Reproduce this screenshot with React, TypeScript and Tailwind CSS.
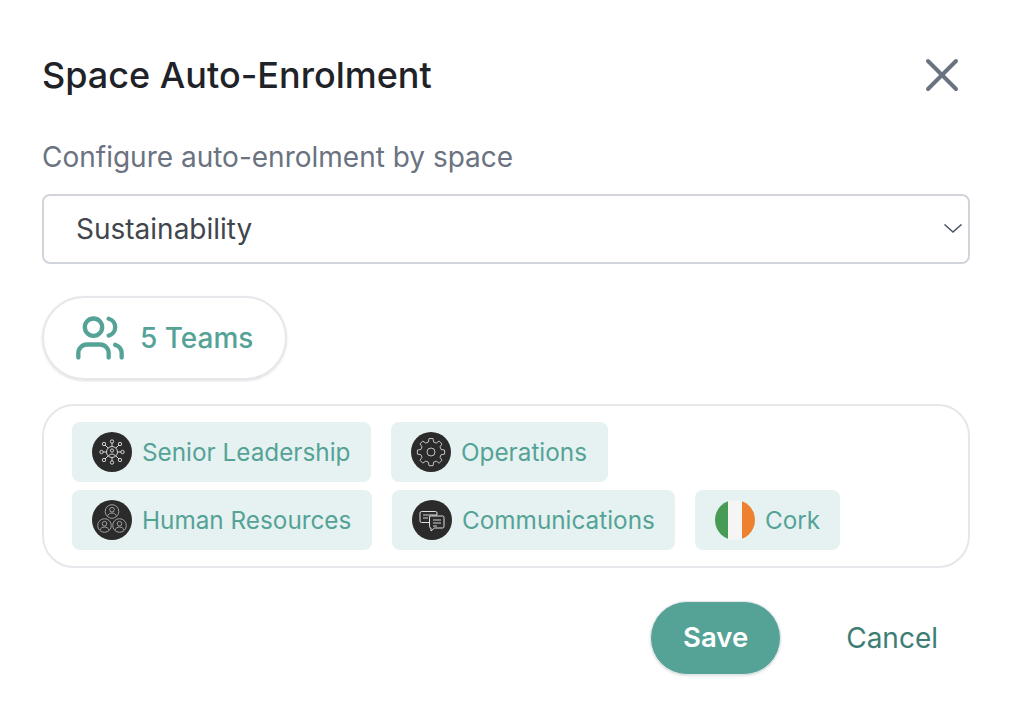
import React from 'react';
import { X, Users } from 'lucide-react';

const SeniorIcon = () => (
  <svg viewBox="0 0 40 40" className="h-10 w-10 rounded-full bg-[#2b2b2b]" fill="none" stroke="#e5e5e5" strokeWidth="0.9">
    <circle cx="20" cy="20" r="5.5" />
    <circle cx="20" cy="18.500" r="1.600" />
    <path d="M16.800 24c.4-2.600 6-2.600 6.400 0" />
    <path d="M20 14.500V11M20 25.500V29M14.500 20H11M25.500 20H29M16 16l-3-3M24 16l3-3M16 24l-3 3M24 24l3 3" />
    <circle cx="20" cy="9.500" r="1.700" />
    <circle cx="20" cy="30.500" r="1.700" />
    <circle cx="9.500" cy="20" r="1.700" />
    <circle cx="30.500" cy="20" r="1.700" />
    <circle cx="12" cy="12" r="1.700" />
    <circle cx="28" cy="12" r="1.700" />
    <circle cx="12" cy="28" r="1.700" />
    <circle cx="28" cy="28" r="1.700" />
  </svg>
);

const PersonRing = ({ cx, cy }: { cx: number; cy: number }) => (
  <g>
    <circle cx={cx} cy={cy} r="6.800" />
    <circle cx={cx} cy={cy - 1.800} r="2.300" />
    <path d={`M${cx - 4.200} ${cy + 4.400}c.4-3.800 8-3.800 8.400 0`} />
  </g>
);

const HrIcon = () => (
  <svg viewBox="0 0 40 40" className="h-10 w-10 rounded-full bg-[#2b2b2b]" fill="none" stroke="#bdbdbd" strokeWidth="0.8">
    <PersonRing cx={20} cy={11.500} />
    <PersonRing cx={12.500} cy={25.500} />
    <PersonRing cx={27.500} cy={25.500} />
  </svg>
);

const GearIcon = () => (
  <svg viewBox="0 0 40 40" className="h-10 w-10 rounded-full bg-[#2b2b2b]" fill="none" stroke="#e8e8e8" strokeWidth="0.8" strokeLinejoin="round">
    <circle cx="20" cy="20" r="4" />
    <path d="M18 6.500h4l.7 3.600 2.500 1 3-2 2.800 2.800-2 3 1 2.500 3.600.7v4l-3.600.7-1 2.500 2 3-2.800 2.800-3-2-2.500 1-.7 3.600h-4l-.7-3.600-2.500-1-3 2-2.800-2.800 2-3-1-2.500-3.600-.7v-4l3.600-.7 1-2.500-2-3 2.800-2.800 3 2 2.500-1z" />
  </svg>
);

const ChatIcon = () => (
  <svg viewBox="0 0 40 40" className="h-10 w-10 rounded-full bg-[#2b2b2b]" fill="none" stroke="#e0e0e0" strokeWidth="1">
    <path d="M9.500 11.500h14a1.500 1.500 0 0 1 1.500 1.500v2h-6a1.500 1.500 0 0 0-1.500 1.500v6H12l-2.500 0a1.500 1.500 0 0 1-1.500-1.500v-8a1.500 1.500 0 0 1 1.500-1.500z" />
    <path d="M19.500 16h11a1.500 1.500 0 0 1 1.500 1.500v9a1.500 1.500 0 0 1-1.500 1.500h-8l-3.500 3v-3a1.500 1.500 0 0 1-1.500-1.500v-9a1.500 1.500 0 0 1 1.500-1.500z" fill="#2b2b2b" />
    <path d="M11 15h9M11 18h5M21 20h8M21 23h8M21 26h4" stroke="#9a9a9a" strokeWidth="1.300" />
  </svg>
);

const FlagIcon = () => (
  <span className="flex h-10 w-10 overflow-hidden rounded-full">
    <span className="flex-1 bg-[#479b54]" />
    <span className="flex-1 bg-[#f5f5f5]" />
    <span className="flex-1 bg-[#ee8130]" />
  </span>
);

const Chip = ({ icon, label, className }: { icon: React.ReactNode; label: string; className: string }) => (
  <div className={`flex h-[60px] items-center gap-[10px] rounded-lg bg-[#e6f2f1] pl-5 text-[24.300px] text-[#55a297] ${className}`}>
    {icon}
    <span>{label}</span>
  </div>
);

export default function App() {
  return (
    <div className="h-[722px] w-[1012px] bg-white px-[42px] pt-[50px] font-['Inter',sans-serif]">
      <div className="flex h-[50px] items-center justify-between">
        <h1 className="text-[36px] font-medium text-[#1f2328]">Space Auto-Enrolment</h1>
        <X className="mr-[0px] h-14 w-14 text-[#6b7280]" strokeWidth={1.700} />
      </div>

      <p className="mt-[37px] h-[40px] text-[28px] leading-[40px] text-[#6b7280]">Configure auto-enrolment by space</p>

      <div className="relative mt-[17px] h-[70px] rounded-lg border-2 border-[#d1d5db]">
        <div className="flex h-full items-center pl-[32px] text-[28px] text-[#41454d]">Sustainability</div>
        <svg viewBox="0 0 18 9" className="absolute right-[6px] top-[28px] h-[9px] w-[18px]" fill="none" stroke="#4b5563" strokeWidth="1.500">
          <path d="M.5.5 9 8l8.500-7.500" />
        </svg>
      </div>

      <div className="mt-8 flex h-[84px] w-[245px] items-center gap-[14px] rounded-full border-2 border-[#e5e7eb] pl-[30px] text-[28px] font-medium text-[#55a297] shadow-sm">
        <Users className="h-[52px] w-[52px] shrink-0" strokeWidth={2} />
        <span>5 Teams</span>
      </div>

      <div className="mt-6 flex h-[164px] flex-col gap-2 rounded-[32px] border-2 border-[#e5e7eb] pl-[28px] pt-4">
        <div className="flex gap-5">
          <Chip icon={<SeniorIcon />} label="Senior Leadership" className="w-[299px]" />
          <Chip icon={<GearIcon />} label="Operations" className="w-[217px]" />
        </div>
        <div className="flex gap-5">
          <Chip icon={<HrIcon />} label="Human Resources" className="w-[300px]" />
          <Chip icon={<ChatIcon />} label="Communications" className="w-[283px]" />
          <Chip icon={<FlagIcon />} label="Cork" className="w-[145px]" />
        </div>
      </div>

      <div className="mt-[33px] flex items-center justify-end">
        <button className="h-[74px] w-[131px] rounded-full border border-[#e5e7eb] bg-[#55a297] text-[27.500px] font-semibold text-white shadow-sm">
          Save
        </button>
        <button className="ml-[65px] mr-[32px] text-[28px] text-[#3d7d74]">Cancel</button>
      </div>
    </div>
  );
}
